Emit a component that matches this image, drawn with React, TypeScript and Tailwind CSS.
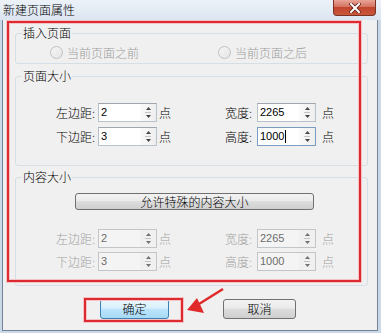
import React from "react";

const Arrow = ({ up, color }: { up?: boolean; color: string }) => (
  <svg width="5" height="3" viewBox="0 0 5 3">
    {up ? <path d="M2.5 0L5 3H0z" fill={color} /> : <path d="M0 0H5L2.5 3z" fill={color} />}
  </svg>
);

const Spin = ({ value, disabled, focused, className }: { value: string; disabled?: boolean; focused?: boolean; className?: string }) => (
  <div
    className={`flex h-[19px] w-[59px] border ${
      focused
        ? "border-[#7a9cc0] bg-white"
        : disabled
        ? "border-[#c3c6c9] bg-[#f4f4f4]"
        : "border-[#b9c1ca] border-t-[#9fa6ae] bg-white"
    } ${className ?? ""}`}
  >
    <div className={`flex flex-1 items-center pl-[2px] font-['Liberation_Sans',sans-serif] text-[11px] leading-[17px] ${disabled ? "text-[#6d6d6d]" : "text-black"}`}>
      {value}
      {focused && <span className="ml-px h-[13px] w-px bg-black" />}
    </div>
    <div className={`flex w-[16px] flex-col ${disabled ? "bg-[#f0f0f0]" : "bg-gradient-to-r from-[#fafafa] to-[#eeeeee]"}`}>
      <div className="flex flex-1 items-end justify-center pb-[2px]">
        <Arrow up color={disabled ? "#707070" : "#444444"} />
      </div>
      <div className="mx-[5px] h-px bg-[#c4c4c4]" />
      <div className="flex flex-1 items-start justify-center pt-[2px]">
        <Arrow color={disabled ? "#707070" : "#444444"} />
      </div>
    </div>
  </div>
);

const Row = ({ l1, v1, l2, v2, disabled, focus2 }: { l1: string; v1: string; l2: string; v2: string; disabled?: boolean; focus2?: boolean }) => {
  const tc = disabled ? "text-[#a2a2a2]" : "text-black";
  return (
    <div className="flex h-[19px] items-center text-[12px] leading-[19px]">
      <span className={`w-[79px] text-right ${tc}`}>{l1}</span>
      <Spin className="ml-[3px]" value={v1} disabled={disabled} />
      <span className={`ml-[2px] w-[12px] ${tc}`}>点</span>
      <span className={`w-[81px] text-right ${tc}`}>{l2}</span>
      <Spin className="ml-[5px]" value={v2} disabled={disabled} focused={focus2} />
      <span className={`ml-[6px] ${tc}`}>点</span>
    </div>
  );
};

const Group = ({ title, h, children }: { title: string; h: string; children: React.ReactNode }) => (
  <div className={`relative w-[353px] rounded-[3px] border border-[#d5dfe5] ${h}`}>
    <span className="absolute left-[6px] top-[-9px] bg-[#f0f0f0] px-[1px] text-[12px] leading-[16px] text-black">{title}</span>
    {children}
  </div>
);

const Radio = ({ label }: { label: string }) => (
  <div className="flex items-center gap-[4px]">
    <span className="h-[13px] w-[13px] rounded-full border border-[#c0c0c0] bg-gradient-to-br from-[#f7f7f7] to-[#e4e4e4]" />
    <span className="text-[12px] leading-[13px] text-[#9c9c9c]">{label}</span>
  </div>
);

const WinButton = ({ label, primary, className }: { label: string; primary?: boolean; className?: string }) => (
  <div
    className={`flex items-center justify-center rounded-[3px] border text-[12px] text-black ${
      primary
        ? "border-[#3c7fb1] bg-[linear-gradient(#eaf6fd_0%,#d9f0fc_45%,#bee6fd_50%,#a7d9f5_100%)]"
        : "border-[#707070] bg-[linear-gradient(#f2f2f2_0%,#ebebeb_45%,#dddddd_50%,#cfcfcf_100%)]"
    } ${className ?? ""}`}
  >
    {label}
  </div>
);

export default function App() {
  return (
    <div className="relative h-[333px] w-[381px] overflow-hidden bg-[#cbd8e6] font-['Noto_Sans_CJK_SC','Microsoft_YaHei',sans-serif] font-light">
      <div className="flex h-[20px] items-start justify-between bg-gradient-to-b from-[#edf2f8] to-[#dbe5f0]">
        <span className="pl-[3px] pt-[2px] text-[12px] leading-[16px] text-black">新建页面属性</span>
        <div className="mr-[5px] flex h-[16px] w-[43px] items-center justify-center rounded-b-[4px] border border-t-0 border-[#7b3326] bg-[linear-gradient(#e9a497_0%,#d47361_45%,#c2452d_50%,#c9583c_100%)]">
          <svg width="12" height="10" viewBox="0 0 12 10">
            <path d="M2 1L10 9M10 1L2 9" stroke="#5a2018" strokeWidth="3.6" strokeLinecap="square" />
            <path d="M2 1L10 9M10 1L2 9" stroke="#ffffff" strokeWidth="2" strokeLinecap="square" />
          </svg>
        </div>
      </div>

      <div className="ml-[2px] h-[311px] w-[376px] border border-t-0 border-[#71849a] bg-[#f0f0f0] pl-[12px] pt-[13px]">
        <Group title="插入页面" h="h-[31px]">
          <div className="flex pl-[34px] pt-[12px]">
            <div className="w-[168px]">
              <Radio label="当前页面之前" />
            </div>
            <Radio label="当前页面之后" />
          </div>
        </Group>

        <div className="mt-[12px]">
          <Group title="页面大小" h="h-[90px]">
            <div className="flex flex-col gap-[5px] pt-[26px]">
              <Row l1="左边距:" v1="2" l2="宽度:" v2="2265" />
              <Row l1="下边距:" v1="3" l2="高度:" v2="1000" focus2 />
            </div>
          </Group>
        </div>

        <div className="mt-[11px]">
          <Group title="内容大小" h="h-[109px]">
            <div className="pl-[59px] pt-[15px]">
              <WinButton label="允许特殊的内容大小" className="h-[17px] w-[239px] leading-[15px]" />
            </div>
            <div className="mt-[19px] flex flex-col gap-[4px]">
              <Row l1="左边距:" v1="2" l2="宽度:" v2="2265" disabled />
              <Row l1="下边距:" v1="3" l2="高度:" v2="1000" disabled />
            </div>
          </Group>
        </div>

        <div className="mt-[13px] flex pl-[85px]">
          <WinButton label="确定" primary className="h-[20px] w-[69px]" />
          <WinButton label="取消" className="ml-[54px] h-[20px] w-[73px]" />
        </div>
      </div>

      {/* annotations */}
      <div className="pointer-events-none absolute left-[7px] top-[21px] h-[261px] w-[354px] border-2 border-[#dc2a30] shadow-[0_0_0_1px_#f5c3c5,inset_0_0_0_1px_#f5c3c5]" />
      <div className="pointer-events-none absolute left-[84px] top-[298px] h-[24px] w-[99px] border-2 border-[#dc2a30] shadow-[0_0_0_1px_#f5c3c5,inset_0_0_0_1px_#f5c3c5]" />
      <svg className="pointer-events-none absolute left-0 top-0" width="381" height="333">
        <line x1="223" y1="289" x2="199" y2="304" stroke="#e02a2a" strokeWidth="2.5" />
        <polygon points="187,310 197,298 204,313" fill="#e02a2a" />
      </svg>
    </div>
  );
}
